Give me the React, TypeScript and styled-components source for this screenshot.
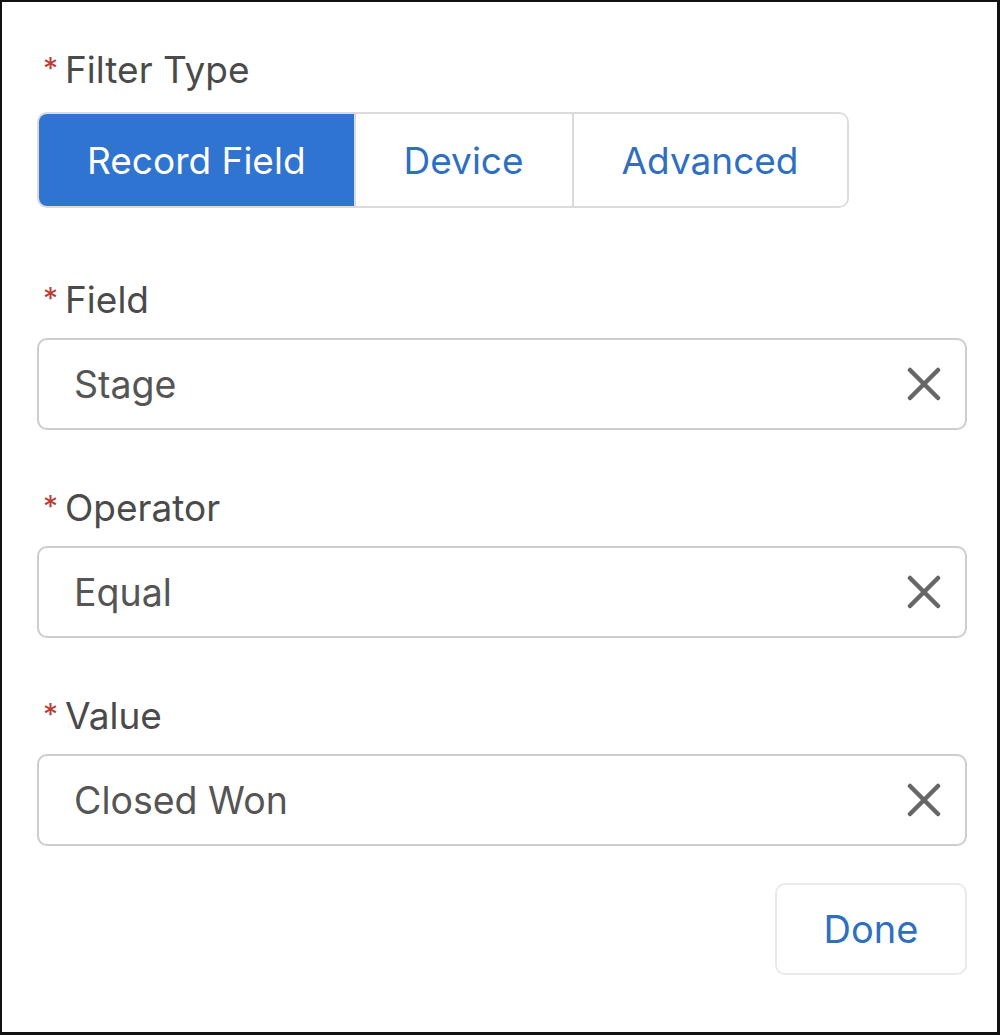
import { useState } from 'react';
import styled, { createGlobalStyle } from 'styled-components';

const GlobalStyle = createGlobalStyle`
  html, body {
    margin: 0;
    padding: 0;
    background: #ffffff;
  }
  * {
    box-sizing: border-box;
  }
`;

const Frame = styled.div`
  width: 1000px;
  height: 1035px;
  border-style: solid;
  border-color: #111111;
  border-width: 2px 3px 3px 2px;
  background: #ffffff;
  padding: 48px 30px 0 34px;
  display: flex;
  flex-direction: column;
  font-family: Inter, 'Liberation Sans', sans-serif;
`;

const Label = styled.div<{ $top: number }>`
  display: flex;
  align-items: flex-start;
  gap: 7px;
  margin-top: ${(p) => p.$top}px;
  padding-left: 7px;
  height: 40px;
  line-height: 40px;
  font-size: 37px;
  color: #4a4a4a;
`;

const Required = styled.span`
  color: #c23934;
  font-size: 30px;
  line-height: 36px;
`;

const Segmented = styled.div`
  display: flex;
  align-self: flex-start;
  margin-top: 22px;
  margin-left: 1px;
  height: 96px;
  border: 2px solid #dddbda;
  border-radius: 10px;
  overflow: hidden;
`;

const Segment = styled.button<{ $active: boolean }>`
  border: none;
  border-left: 2px solid #dddbda;
  &:first-child {
    border-left: none;
  }
  padding: 0 48px;
  background: ${(p) => (p.$active ? '#2e74d0' : '#ffffff')};
  color: ${(p) => (p.$active ? '#ffffff' : '#2e6fc1')};
  font-family: inherit;
  font-size: 37px;
  cursor: pointer;
`;

const Input = styled.div`
  display: flex;
  align-items: center;
  justify-content: space-between;
  margin-top: 18px;
  margin-left: 1px;
  height: 92px;
  padding: 0 24px 0 35px;
  border: 2px solid #cfcdcb;
  border-radius: 10px;
  font-size: 37.5px;
  color: #555555;
`;

const ClearIcon = styled.svg`
  width: 34px;
  height: 34px;
  stroke: #666666;
  stroke-width: 4.5;
  stroke-linecap: round;
`;

const Footer = styled.div`
  display: flex;
  justify-content: flex-end;
  margin-top: 37px;
`;

const DoneButton = styled.button`
  width: 192px;
  height: 92px;
  border: 2px solid #eaeaea;
  border-radius: 10px;
  background: #ffffff;
  color: #2e6fc1;
  font-family: inherit;
  font-size: 38px;
  cursor: pointer;
`;

const fields = [
  { label: 'Field', value: 'Stage', top: 72 },
  { label: 'Operator', value: 'Equal', top: 58 },
  { label: 'Value', value: 'Closed Won', top: 58 },
];

function App() {
  const [mode, setMode] = useState('Record Field');

  return (
    <>
      <GlobalStyle />
      <Frame>
        <Label $top={0}>
          <Required>*</Required>
          Filter Type
        </Label>
        <Segmented>
          {['Record Field', 'Device', 'Advanced'].map((m) => (
            <Segment key={m} $active={m === mode} onClick={() => setMode(m)}>
              {m}
            </Segment>
          ))}
        </Segmented>
        {fields.map((f) => (
          <div key={f.label}>
            <Label $top={f.top}>
              <Required>*</Required>
              {f.label}
            </Label>
            <Input>
              {f.value}
              <ClearIcon viewBox="0 0 34 34" fill="none">
                <path d="M3 3 L31 31 M31 3 L3 31" />
              </ClearIcon>
            </Input>
          </div>
        ))}
        <Footer>
          <DoneButton>Done</DoneButton>
        </Footer>
      </Frame>
    </>
  );
}

export default App;
